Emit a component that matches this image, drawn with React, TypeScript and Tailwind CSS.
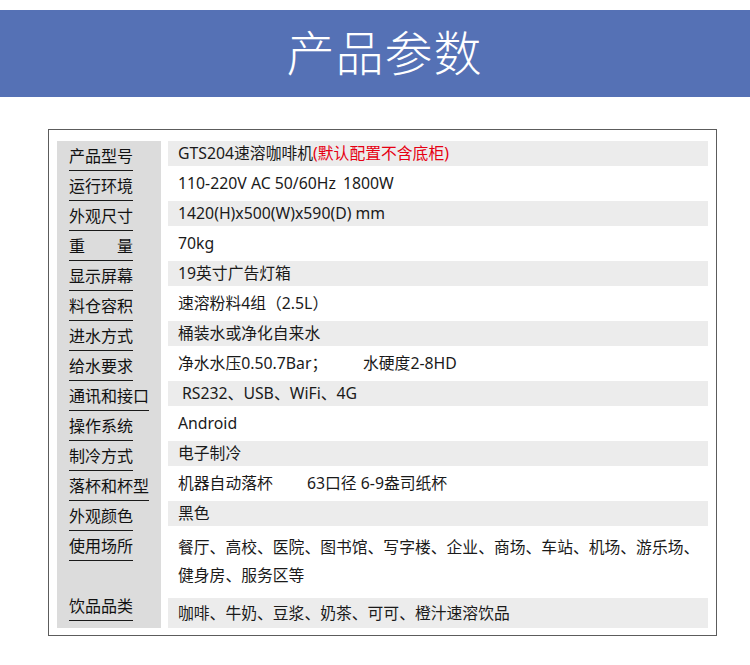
import React from "react";

type Row = { label: string; value: React.ReactNode; stripe: boolean };

const rows: Row[] = [
  {
    label: "产品型号",
    stripe: true,
    value: (
      <>
        GTS204速溶咖啡机<span className="text-[#e60012]">(默认配置不含底柜)</span>
      </>
    ),
  },
  {
    label: "运行环境",
    stripe: false,
    value: (
      <>
        110-220V AC 50/60Hz<span className="ml-[7px]">1800W</span>
      </>
    ),
  },
  { label: "外观尺寸", stripe: true, value: "1420(H)x500(W)x590(D) mm" },
  { label: "重量", stripe: false, value: "70kg" },
  { label: "显示屏幕", stripe: true, value: "19英寸广告灯箱" },
  { label: "料仓容积", stripe: false, value: "速溶粉料4组（2.5L）" },
  { label: "进水方式", stripe: true, value: "桶装水或净化自来水" },
  {
    label: "给水要求",
    stripe: false,
    value: (
      <>
        <span className="inline-block w-[185px]">净水水压0.50.7Bar；</span>
        水硬度2-8HD
      </>
    ),
  },
  {
    label: "通讯和接口",
    stripe: true,
    value: <span className="pl-[4px]">RS232、USB、WiFi、4G</span>,
  },
  { label: "操作系统", stripe: false, value: "Android" },
  { label: "制冷方式", stripe: true, value: "电子制冷" },
  {
    label: "落杯和杯型",
    stripe: false,
    value: (
      <>
        <span className="inline-block w-[129px]">机器自动落杯</span>
        63口径 6-9盎司纸杯
      </>
    ),
  },
  { label: "外观颜色", stripe: true, value: "黑色" },
];

const Label = ({ text }: { text: string }) => (
  <div className="h-[30px] flex items-end pl-[12px]">
    {text === "重量" ? (
      <span className="flex justify-between w-[64px] leading-[16px] pb-[7px] border-b border-[#1a1a1a]">
        <span>重</span>
        <span>量</span>
      </span>
    ) : (
      <span className="inline-block leading-[16px] pb-[7px] border-b border-[#1a1a1a]">
        {text}
      </span>
    )}
  </div>
);

export default function App() {
  return (
    <div className="w-[750px] h-[665px] bg-white pt-[10px]">
      {/* title band */}
      <div className="h-[87px] bg-[#5571b5] flex items-center justify-center pl-[19px] pb-[8px]">
        <h1
          className="text-white text-[48px] font-light leading-none tracking-[1px]"
          style={{ fontFamily: '"Noto Sans CJK SC", sans-serif' }}
        >
          产品参数
        </h1>
      </div>

      {/* spec table */}
      <div className="mt-[32px] ml-[48px] w-[669px] border border-[#5c5c5c] pt-[11px] px-[8px] pb-[7px]">
        <div className="flex">
          <div
            className="w-[104px] bg-[#dcdcdc] text-[16px] text-[#111] pb-[6px]"
            style={{ fontFamily: '"Noto Sans CJK SC", sans-serif' }}
          >
            {rows.map((r) => (
              <Label key={r.label} text={r.label} />
            ))}
            <Label text="使用场所" />
            <div className="h-[30px]" />
            <Label text="饮品品类" />
          </div>

          <div
            className="flex-1 ml-[7px] text-[15.8px] text-[#1a1a1a]"
            style={{ fontFamily: '"Noto Sans", "Noto Sans CJK SC", sans-serif' }}
          >
            {rows.map((r) => (
              <div key={r.label} className="h-[30px]">
                <div
                  className={`h-[25px] leading-[25px] pl-[10px] whitespace-nowrap ${
                    r.stripe ? "bg-[#ececec]" : ""
                  }`}
                >
                  {r.value}
                </div>
              </div>
            ))}
            <div className="h-[67px] pt-[2px] pl-[10px] whitespace-nowrap">
              <div className="leading-[28px]">
                餐厅、高校、医院、图书馆、写字楼、企业、商场、车站、机场、游乐场、
              </div>
              <div className="leading-[28px]">健身房、服务区等</div>
            </div>
            <div className="h-[30px] leading-[30px] pl-[10px] bg-[#ececec] whitespace-nowrap">
              咖啡、牛奶、豆浆、奶茶、可可、橙汁速溶饮品
            </div>
          </div>
        </div>
      </div>
    </div>
  );
}
